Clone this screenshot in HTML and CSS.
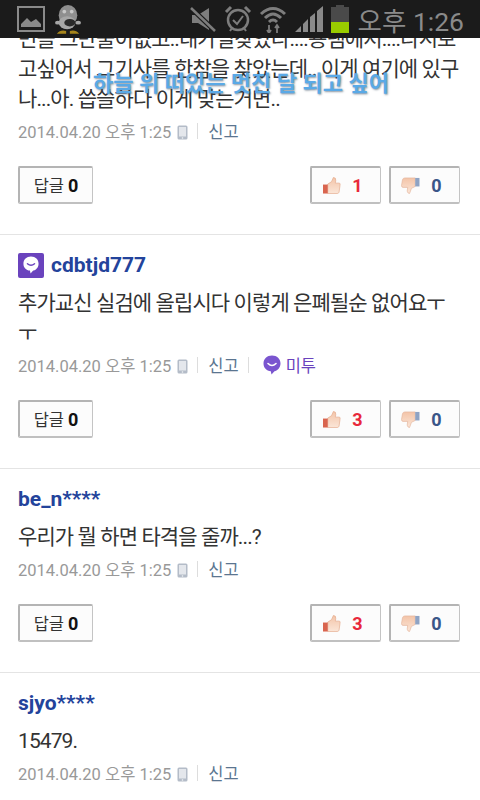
FILE: index.html
```html
<!DOCTYPE html>
<html lang="ko">
<head>
<meta charset="UTF-8">
<meta name="viewport" content="width=device-width, initial-scale=1.0">
<title>댓글</title>
<link rel="stylesheet" href="styles.css">
</head>
<body>
<svg class="defs" width="0" height="0">
    <defs>
        <linearGradient id="skin" x1="0" y1="0" x2="0" y2="1">
            <stop offset="0" stop-color="#f3c4a8"/>
            <stop offset="1" stop-color="#fbe6d8"/>
        </linearGradient>
        <symbol id="thumb" viewBox="0 0 20 18">
            <path d="M6 7.500 L10 5 L12 0.5 Q15 0.5 14.5 4 L14 6.500 L18.500 6.500 Q19.500 7 19 9 L18 16 Q17.500 17.500 16 17.500 L6 17.500 Z" fill="url(#skin)" stroke="#e3a88a" stroke-width=".7"/>
            <rect x="1" y="8" width="5" height="9.500" fill="#d9654f"/>
        </symbol>
        <symbol id="thumbdown" viewBox="0 0 20 18">
            <path d="M15 1 L4 1 Q2 1 1.500 3 L0.500 9 Q0.500 11 2 11 L7 11 L6.500 15 Q7 17.500 9 17.500 L11 12 L15 10 Z" fill="url(#skin)" stroke="#e3b59c" stroke-width=".7"/>
            <rect x="15" y="1" width="4.500" height="9" fill="#8ea3c4"/>
        </symbol>
        <symbol id="phone" viewBox="0 0 11 15">
            <rect x=".5" y=".5" width="10" height="14" rx="1.500" fill="#b4bcc8"/>
            <rect x="2" y="2" width="7" height="9.500" fill="#e4e7ec"/>
            <circle cx="5.500" cy="13" r=".8" fill="#f2f4f6"/>
        </symbol>
        <symbol id="bubble" viewBox="0 0 18 20">
            <path d="M9 .5 C14 .5 17.500 4 17.500 8.500 C17.500 13 14 16 11.500 16.200 L8.500 19.500 L7.800 16.300 C3.500 15.800 .5 12.800 .5 8.500 C.5 4 4 .5 9 .5 Z" fill="#7a55cf"/>
            <path d="M5 8.500 Q9 12.500 13 8.500" fill="none" stroke="#fff" stroke-width="1.600" stroke-linecap="round"/>
        </symbol>
    </defs>
</svg>

<div class="statusbar">
    <div class="status-left">
        <svg class="st-pic" viewBox="0 0 28 26" width="28" height="26">
            <rect x="1" y="1" width="26" height="24" fill="none" stroke="#8a8a8a" stroke-width="2"/>
            <path d="M4 21 L4 18 L10 12 L14 16 L19 13 L24 18 L24 21 Z" fill="#8a8a8a"/>
        </svg>
        <svg class="st-pet" viewBox="0 0 28 32" width="26" height="30">
            <ellipse cx="14" cy="12" rx="10" ry="11" fill="#8f8f8f"/>
            <ellipse cx="3" cy="20" rx="3" ry="2" fill="#a8a8a8"/>
            <ellipse cx="25" cy="20" rx="3" ry="2" fill="#a8a8a8"/>
            <ellipse cx="13" cy="20" rx="9" ry="7" fill="#a6a6a6"/>
            <ellipse cx="16" cy="20" rx="6" ry="4" fill="#2a2a2a"/>
            <circle cx="10" cy="8" r="2" fill="#c8c8c8"/>
            <circle cx="18" cy="8" r="2" fill="#c8c8c8"/>
            <path d="M2 32 Q6 27 12 29 L12 32 Z M16 29 Q22 27 26 32 L16 32 Z" fill="#a8861c"/>
        </svg>
    </div>
    <div class="status-right">
        <svg viewBox="0 0 28 28" width="28" height="28">
            <path d="M3 10 L9 10 L20 3 L20 25 L9 18 L3 18 Z" fill="#7d7d7d"/>
            <path d="M2 3 L26 26" stroke="#1b1b1b" stroke-width="5"/>
            <path d="M2 3 L26 26" stroke="#7d7d7d" stroke-width="2.500"/>
        </svg>
        <svg viewBox="0 0 28 28" width="28" height="28">
            <circle cx="14" cy="15" r="10" fill="none" stroke="#7d7d7d" stroke-width="2.500"/>
            <path d="M9 15 L13 19 L19 11" fill="none" stroke="#7d7d7d" stroke-width="2"/>
            <path d="M2 7 L7 2 M21 2 L26 7" stroke="#7d7d7d" stroke-width="3"/>
            <path d="M6 26 L8 23 M22 26 L20 23" stroke="#7d7d7d" stroke-width="2"/>
        </svg>
        <svg viewBox="0 0 28 28" width="28" height="28">
            <path d="M2 9 Q14 -2 26 9" fill="none" stroke="#7d7d7d" stroke-width="3"/>
            <path d="M6 13 Q14 5 22 13" fill="none" stroke="#7d7d7d" stroke-width="3"/>
            <path d="M10 17 Q14 13 18 17" fill="none" stroke="#7d7d7d" stroke-width="3"/>
            <path d="M10 20 L10 28 M8 25 L10 28 L12 25 M18 28 L18 20 M16 23 L18 20 L20 23" fill="none" stroke="#7d7d7d" stroke-width="1.800"/>
        </svg>
        <svg viewBox="0 0 30 28" width="30" height="28">
            <path d="M1 27 L7 27 L7 21 Z M9 27 L14 27 L14 14 L9 19 Z M16 27 L21 27 L21 8 L16 12 Z M23 27 L29 27 L29 1 L23 6 Z" fill="#8a8a8a"/>
        </svg>
        <div class="battery"><div class="battery-cap"></div><div class="battery-body"><div class="battery-fill"></div></div></div>
        <span class="clock">오후 1:26</span>
    </div>
</div>

<div class="floating">하늘 위 떠있는 멋진 달 되고 싶어</div>

<main class="list">
    <article class="comment first">
        <p class="body">면을 그만둘이없고..내가일찾았다....용램에서....다시보 고싶어서 그기사를 한참을 찾았는데.. 이게 여기에 있구나...아. 씁쓸하다 이게 맞는거면..</p>
        <div class="meta">
            <span class="date">2014.04.20 오후 1:25</span>
            <svg class="phone"><use href="#phone"/></svg>
            <span class="sep"></span>
            <a class="report">신고</a>
        </div>
        <div class="actions">
            <button class="btn reply">답글 <b>0</b></button>
            <div class="votes">
                <button class="btn vote"><svg class="thumb"><use href="#thumb"/></svg><b class="up">1</b></button>
                <button class="btn vote"><svg class="thumb"><use href="#thumbdown"/></svg><b class="down">0</b></button>
            </div>
        </div>
    </article>

    <article class="comment">
        <div class="author">
            <span class="avatar"><svg viewBox="0 0 18 20" width="16" height="18"><path d="M9 .5 C14 .5 17.500 4 17.500 8.500 C17.500 13 14 16 11.500 16.200 L8.500 19.500 L7.800 16.300 C3.500 15.800 .5 12.800 .5 8.500 C.5 4 4 .5 9 .5 Z" fill="#fff"/><path d="M5 8.500 Q9 12 13 8.500" fill="none" stroke="#6a43bd" stroke-width="1.600" stroke-linecap="round"/></svg></span>
            <span class="name">cdbtjd777</span>
        </div>
        <p class="body">추가교신 실검에 올립시다 이렇게 은폐될순 없어요ㅜ ㅜ</p>
        <div class="meta">
            <span class="date">2014.04.20 오후 1:25</span>
            <svg class="phone"><use href="#phone"/></svg>
            <span class="sep"></span>
            <a class="report">신고</a>
            <span class="sep"></span>
            <svg class="bubble"><use href="#bubble"/></svg>
            <a class="metoo">미투</a>
        </div>
        <div class="actions">
            <button class="btn reply">답글 <b>0</b></button>
            <div class="votes">
                <button class="btn vote"><svg class="thumb"><use href="#thumb"/></svg><b class="up">3</b></button>
                <button class="btn vote"><svg class="thumb"><use href="#thumbdown"/></svg><b class="down">0</b></button>
            </div>
        </div>
    </article>

    <article class="comment">
        <div class="author"><span class="name">be_n****</span></div>
        <p class="body">우리가 뭘 하면 타격을 줄까...?</p>
        <div class="meta">
            <span class="date">2014.04.20 오후 1:25</span>
            <svg class="phone"><use href="#phone"/></svg>
            <span class="sep"></span>
            <a class="report">신고</a>
        </div>
        <div class="actions">
            <button class="btn reply">답글 <b>0</b></button>
            <div class="votes">
                <button class="btn vote"><svg class="thumb"><use href="#thumb"/></svg><b class="up">3</b></button>
                <button class="btn vote"><svg class="thumb"><use href="#thumbdown"/></svg><b class="down">0</b></button>
            </div>
        </div>
    </article>

    <article class="comment">
        <div class="author"><span class="name">sjyo****</span></div>
        <p class="body">15479.</p>
        <div class="meta">
            <span class="date">2014.04.20 오후 1:25</span>
            <svg class="phone"><use href="#phone"/></svg>
            <span class="sep"></span>
            <a class="report">신고</a>
        </div>
    </article>
</main>
</body>
</html>
```

FILE: styles.css
```css
html, body {
    margin: 0;
    padding: 0;
    height: 800px;
    overflow: hidden;
    background: #fff;
}
body {
    font-family: Roboto, "Noto Sans CJK KR", sans-serif;
    color: #333;
}
.defs {
    position: absolute;
}

/* status bar */
.statusbar {
    height: 38px;
    background: #1b1b1b;
    display: flex;
    justify-content: space-between;
    align-items: center;
    padding: 0 16px 0 17px;
    position: relative;
    z-index: 2;
}
.status-left, .status-right {
    display: flex;
    align-items: center;
}
.status-left {
    gap: 10px;
}
.status-right {
    gap: 7px;
}
.battery {
    width: 18px;
}
.battery-cap {
    width: 8px;
    height: 2px;
    margin: 0 auto;
    background: #4a4a4a;
}
.battery-body {
    height: 26px;
    background: #4a4a4a;
    display: flex;
    align-items: flex-end;
}
.battery-fill {
    width: 100%;
    height: 11px;
    background: #9c0;
}
.clock {
    font-size: 26.500px;
    color: #8a8a8a;
    margin-left: 2px;
    white-space: nowrap;
}

.floating {
    position: absolute;
    top: 69px;
    left: 0;
    width: 482px;
    text-align: center;
    font-size: 22px;
    font-weight: 700;
    line-height: 30px;
    color: #5aa9e6;
    text-shadow: 1px 1px 2px rgba(60, 80, 100, .6);
    z-index: 3;
}

/* comments */
.list {
    height: 762px;
    overflow: hidden;
}
.comment {
    padding: 16px 20px 30px 18px;
    border-bottom: 1px solid #e4e4e4;
}
.comment.first {
    margin-top: -14px;
    padding-top: 0;
}
.author {
    display: flex;
    align-items: center;
    gap: 7px;
    height: 28px;
    margin-bottom: 9px;
}
.avatar {
    width: 26px;
    height: 25px;
    background: #6a43bd;
    border-radius: 2px;
    display: flex;
    align-items: center;
    justify-content: center;
}
.name {
    font-size: 21px;
    font-weight: 700;
    color: #23439b;
}
.body {
    margin: 0;
    font-size: 21px;
    line-height: 30px;
    letter-spacing: -.9px;
    color: #333;
}
.meta {
    display: flex;
    align-items: center;
    height: 24px;
    margin-top: 5px;
    font-size: 16.500px;
}
.date {
    color: #999;
}
.phone {
    width: 11px;
    height: 15px;
    margin: 3px 0 0 6px;
}
.sep {
    width: 1px;
    height: 16px;
    background: #ddd;
    margin: 0 10px 0 9px;
}
.report {
    color: #5b7590;
}
.bubble {
    width: 18px;
    height: 20px;
    margin: 0 5px 0 4px;
}
.metoo {
    color: #6a43bd;
}
.actions {
    display: flex;
    justify-content: space-between;
    margin-top: 23px;
}
.votes {
    display: flex;
    gap: 8px;
}
.btn {
    display: flex;
    align-items: center;
    justify-content: center;
    height: 38px;
    margin: 0;
    padding: 0;
    background: #fcfcfc;
    border: 1px solid #c4c4c4;
    border-top: 2px solid #b4b4b4;
    border-bottom: 2px solid #c0c0c0;
    border-left: 2px solid #b4b4b4;
    border-radius: 2px;
    font-family: inherit;
    font-size: 16.500px;
    color: #333;
}
.reply {
    width: 75px;
    gap: 4px;
}
.reply b {
    font-size: 18px;
    color: #111;
}
.vote {
    width: 71px;
    gap: 11px;
    padding-right: 7px;
}
.thumb {
    width: 19px;
    height: 17px;
}
.vote b {
    font-size: 18px;
}
.up {
    color: #e8283a;
}
.down {
    color: #3a5688;
}
```
